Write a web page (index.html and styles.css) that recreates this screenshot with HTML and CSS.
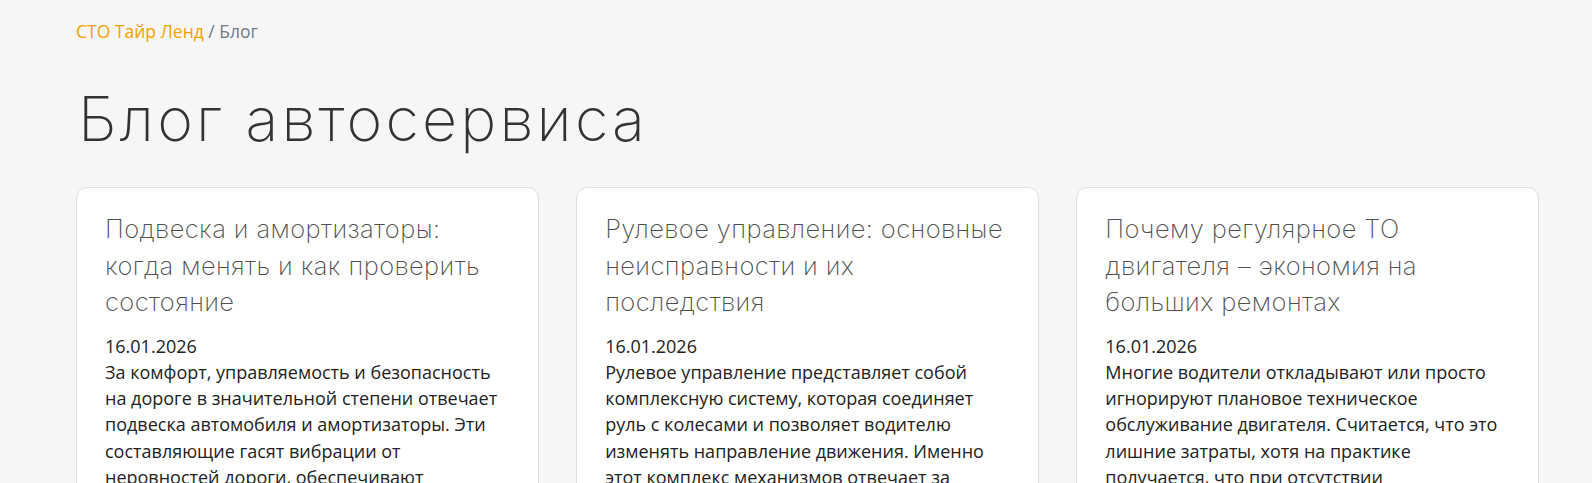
FILE: index.html
```html
<!DOCTYPE html>
<html lang="ru">
<head>
<meta charset="utf-8">
<title>Блог автосервиса</title>
<link rel="stylesheet" href="styles.css">
</head>
<body>
<main class="page">
  <nav class="breadcrumbs"><a class="crumb-link" href="#">СТО Тайр Ленд</a><span class="crumb-sep"> / </span><span class="crumb-current">Блог</span></nav>
  <h1 class="page-title">Блог автосервиса</h1>
  <section class="cards">
    <article class="card">
      <h2 class="card-title">Подвеска и амортизаторы: когда менять и как проверить состояние</h2>
      <div class="card-date">16.01.2026</div>
      <p class="card-text">За комфорт, управляемость и безопасность на дороге в значительной степени отвечает подвеска автомобиля и амортизаторы. Эти составляющие гасят вибрации от неровностей дороги, обеспечивают устойчивость автомобиля.</p>
    </article>
    <article class="card">
      <h2 class="card-title">Рулевое управление: основные неисправности и их последствия</h2>
      <div class="card-date">16.01.2026</div>
      <p class="card-text">Рулевое управление представляет собой комплексную систему, которая соединяет руль с колесами и позволяет водителю изменять направление движения. Именно этот комплекс механизмов отвечает за безопасность.</p>
    </article>
    <article class="card">
      <h2 class="card-title">Почему регулярное ТО двигателя – экономия на больших ремонтах</h2>
      <div class="card-date">16.01.2026</div>
      <p class="card-text">Многие водители откладывают или просто игнорируют плановое техническое обслуживание двигателя. Считается, что это лишние затраты, хотя на практике получается, что при отсутствии обслуживания.</p>
    </article>
  </section>
</main>
</body>
</html>
```

FILE: styles.css
```css
html, body {
  margin: 0;
  padding: 0;
}
body {
  background: #f6f6f6;
  font-family: "Open Sans", "Liberation Sans", sans-serif;
  color: #222;
  overflow: hidden;
}
.page {
  width: 1463px;
  padding: 18.5px 0 0 76px;
}
.breadcrumbs {
  font-size: 17.5px;
  line-height: 24px;
}
.crumb-link {
  color: #f5a100;
  text-decoration: none;
}
.crumb-sep,
.crumb-current {
  color: #6f7b86;
}
.page-title {
  margin: 36px 0 0 2px;
  font-family: "Inter", "Noto Sans", sans-serif;
  font-weight: 200;
  font-size: 61px;
  line-height: 80px;
  color: #333;
  letter-spacing: 3.2px;
}
.cards {
  margin-top: 28.5px;
  display: grid;
  grid-template-columns: repeat(3, 1fr);
  column-gap: 37.5px;
}
.card {
  background: #fff;
  border: 1px solid #dedede;
  border-radius: 11px;
  padding: 23px 23px 0 28px;
  height: 320px;
  overflow: hidden;
}
.card-title {
  margin: 0;
  font-family: "Inter", "Noto Sans", sans-serif;
  font-weight: 250;
  font-size: 25.5px;
  line-height: 36.5px;
  letter-spacing: 0.4px;
  color: #4f4f4f;
}
.card-date {
  margin-top: 12px;
  font-size: 18px;
  line-height: 26px;
  color: #222;
}
.card-text {
  margin: 0;
  font-size: 18px;
  line-height: 26.4px;
  color: #222;
}
```
